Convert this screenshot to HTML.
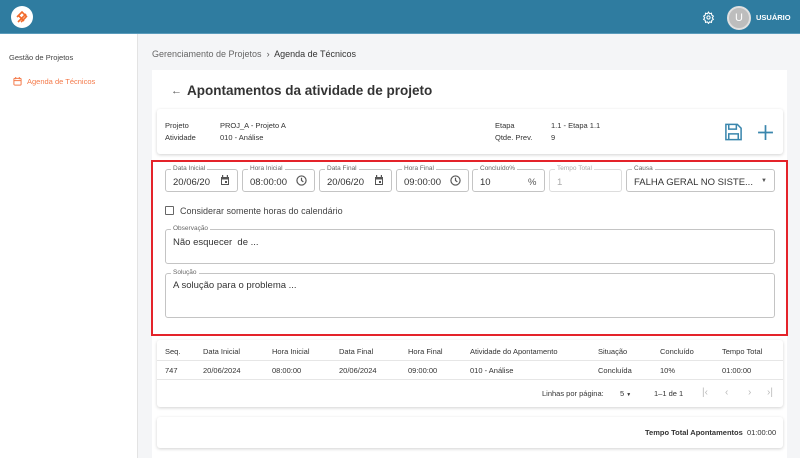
<!DOCTYPE html>
<html><head><meta charset="utf-8"><style>
*{box-sizing:border-box;margin:0;padding:0}
body{width:800px;height:458px;overflow:hidden;font-family:"Liberation Sans",sans-serif;background:#f4f5f7;position:relative;color:#333}
.a{position:absolute}
.hdr{left:0;top:0;width:800px;height:34px;background:#2f7ca0;border-bottom:1px solid #5a9bbb}
.side{left:0;top:34px;width:138px;height:424px;background:#fff;border-right:1px solid #e3e3e3}
.panel{left:152px;top:70px;width:635px;height:388px;background:#fff}
.card{background:#fff;border-radius:3px;box-shadow:0 1px 3px rgba(0,0,0,.18)}
.f{position:absolute;height:23px;border:1px solid #c4c4c4;border-radius:3px;font-size:9.5px;color:#333;padding:7px 0 0 7px}
.f .l{position:absolute;top:-5px;left:5px;background:#fff;padding:0 2px;font-size:6.5px;color:#666;line-height:8px}
.t{font-size:7.5px;color:#333}
.th{font-size:7.5px;color:#333}
.pg{position:absolute;top:387px;font-size:10px;color:#bbb}
</style></head><body>
<div class="a hdr"></div>
<div class="a" style="left:11px;top:6px;width:22px;height:22px;border-radius:50%;background:#fff"></div>
<svg class="a" style="left:15px;top:10px" width="14" height="14" viewBox="0 0 14 14" fill="none" stroke="#f26a2a" stroke-width="1.6"><path d="M2 7l5-5 5 5M3 12l8-8M6 12l5-5M3 5l6 6"/></svg>
<svg class="a" style="left:702px;top:11px" width="13" height="13" viewBox="0 0 24 24" fill="none" stroke="#fff" stroke-width="2"><circle cx="12" cy="12" r="3"/><path d="M12 2l2 3 3.5-1 .5 3.5 3 2-2 3 2 3-3 2-.5 3.5-3.5-1-2 3-2-3-3.5 1-.5-3.5-3-2 2-3-2-3 3-2 .5-3.5 3.5 1z"/></svg>
<div class="a" style="left:727px;top:6px;width:24px;height:24px;border-radius:50%;background:#bdbdbd;border:2px solid #e0e0e0;color:#fff;font-size:11px;text-align:center;line-height:20px">U</div>
<div class="a" style="left:756px;top:13px;font-size:7.5px;font-weight:bold;color:#fff">USUÁRIO</div>
<div class="a side"></div>
<div class="a" style="left:9px;top:53px;font-size:7.5px;color:#444">Gestão de Projetos</div>
<svg class="a" style="left:13px;top:77px" width="9" height="9" viewBox="0 0 10 10" fill="none" stroke="#f47a4a" stroke-width="1.1"><rect x="1" y="1.5" width="8" height="7.5" rx="1"/><path d="M1 4h8M3 0v2.5M7 0v2.5"/></svg>
<div class="a" style="left:27px;top:77px;font-size:7.5px;color:#f47a4a">Agenda de Técnicos</div>
<div class="a" style="left:152px;top:49px;font-size:9px;color:#666">Gerenciamento de Projetos &nbsp;<span style="color:#555">›</span>&nbsp; <span style="color:#333">Agenda de Técnicos</span></div>
<div class="a panel"></div>
<div class="a" style="left:171px;top:85px;font-size:11px;color:#555">←</div>
<div class="a" style="left:187px;top:83px;font-size:13.5px;font-weight:bold;color:#333">Apontamentos da atividade de projeto</div>
<div class="a card" style="left:157px;top:109px;width:626px;height:45px"></div>
<div class="a t" style="left:165px;top:120px;line-height:12px">Projeto<br>Atividade</div>
<div class="a t" style="left:220px;top:120px;line-height:12px">PROJ_A - Projeto A<br>010 - Análise</div>
<div class="a t" style="left:495px;top:120px;line-height:12px">Etapa<br>Qtde. Prev.</div>
<div class="a t" style="left:551px;top:120px;line-height:12px">1.1 - Etapa 1.1<br>9</div>
<svg class="a" style="left:724px;top:122px" width="19" height="20" viewBox="0 0 20 20" fill="none" stroke="#3a86ad" stroke-width="1.6"><path d="M2 2h12l4 4v12H2z"/><path d="M5 2v5h8V2M5 18v-6h10v6"/></svg>
<svg class="a" style="left:757px;top:124px" width="17" height="17" viewBox="0 0 16 16" stroke="#3a86ad" stroke-width="1.6"><path d="M8 1v14M1 8h14"/></svg>
<div class="a" style="left:151px;top:160px;width:637px;height:176px;border:2px solid #e4232a"></div>
<div class="f" style="left:165px;top:169px;width:73px">20/06/20<span class="l">Data Inicial</span></div>
<div class="f" style="left:242px;top:169px;width:73px">08:00:00<span class="l">Hora Inicial</span></div>
<div class="f" style="left:319px;top:169px;width:73px">20/06/20<span class="l">Data Final</span></div>
<div class="f" style="left:396px;top:169px;width:73px">09:00:00<span class="l">Hora Final</span></div>
<div class="f" style="left:472px;top:169px;width:73px">10<span style="position:absolute;left:55px;color:#555">%</span><span class="l">Concluído%</span></div>
<div class="f" style="left:549px;top:169px;width:73px;color:#aaa;border-color:#ddd">1<span class="l" style="color:#aaa">Tempo Total</span></div>
<div class="f" style="left:626px;top:169px;width:149px">FALHA GERAL NO SISTE...<span style="position:absolute;left:134px;top:8px;font-size:6px;color:#555">▼</span><span class="l">Causa</span></div>
<svg class="a" style="left:220px;top:175px" width="10" height="11" viewBox="0 0 10 11" fill="#555"><path d="M1 2h8v8H1zM2 4.5v4.5h6V4.5z"/><rect x="2" y="0" width="1.2" height="2.5"/><rect x="6.8" y="0" width="1.2" height="2.5"/><rect x="5" y="6" width="2" height="2"/></svg>
<svg class="a" style="left:374px;top:175px" width="10" height="11" viewBox="0 0 10 11" fill="#555"><path d="M1 2h8v8H1zM2 4.5v4.5h6V4.5z"/><rect x="2" y="0" width="1.2" height="2.5"/><rect x="6.8" y="0" width="1.2" height="2.5"/><rect x="5" y="6" width="2" height="2"/></svg>
<svg class="a" style="left:296px;top:175px" width="11" height="11" viewBox="0 0 12 12" fill="none" stroke="#555" stroke-width="1.3"><circle cx="6" cy="6" r="5"/><path d="M6 3v3l2 1.5"/></svg>
<svg class="a" style="left:450px;top:175px" width="11" height="11" viewBox="0 0 12 12" fill="none" stroke="#555" stroke-width="1.3"><circle cx="6" cy="6" r="5"/><path d="M6 3v3l2 1.5"/></svg>
<div class="a" style="left:165px;top:206px;width:9px;height:9px;border:1.3px solid #666;border-radius:1px"></div>
<div class="a" style="left:180px;top:206px;font-size:9px;color:#444">Considerar somente horas do calendário</div>
<div class="f" style="left:165px;top:229px;width:610px;height:35px;padding-top:7px">Não esquecer &nbsp;de ...<span class="l">Observação</span></div>
<div class="f" style="left:165px;top:273px;width:610px;height:45px;padding-top:6px">A solução para o problema ...<span class="l">Solução</span></div>
<div class="a card" style="left:157px;top:340px;width:626px;height:67px"></div>
<div class="a" style="left:157px;top:360px;width:626px;border-top:1px solid #e6e6e6"></div>
<div class="a" style="left:157px;top:379px;width:626px;border-top:1px solid #e6e6e6"></div>
<div class="a th" style="left:165px;top:347px">Seq.</div>
<div class="a th" style="left:203px;top:347px">Data Inicial</div>
<div class="a th" style="left:272px;top:347px">Hora Inicial</div>
<div class="a th" style="left:339px;top:347px">Data Final</div>
<div class="a th" style="left:408px;top:347px">Hora Final</div>
<div class="a th" style="left:470px;top:347px">Atividade do Apontamento</div>
<div class="a th" style="left:598px;top:347px">Situação</div>
<div class="a th" style="left:660px;top:347px">Concluído</div>
<div class="a th" style="left:722px;top:347px">Tempo Total</div>
<div class="a t" style="left:165px;top:366px">747</div>
<div class="a t" style="left:203px;top:366px">20/06/2024</div>
<div class="a t" style="left:272px;top:366px">08:00:00</div>
<div class="a t" style="left:339px;top:366px">20/06/2024</div>
<div class="a t" style="left:408px;top:366px">09:00:00</div>
<div class="a t" style="left:470px;top:366px">010 - Análise</div>
<div class="a t" style="left:598px;top:366px">Concluída</div>
<div class="a t" style="left:660px;top:366px">10%</div>
<div class="a t" style="left:722px;top:366px">01:00:00</div>
<div class="a t" style="left:542px;top:389px">Linhas por página:</div>
<div class="a t" style="left:620px;top:389px">5 <span style="font-size:5px">▼</span></div>
<div class="a t" style="left:654px;top:389px">1–1 de 1</div>
<div class="pg" style="left:702px">|‹</div>
<div class="pg" style="left:725px">‹</div>
<div class="pg" style="left:748px">›</div>
<div class="pg" style="left:767px">›|</div>
<div class="a card" style="left:157px;top:417px;width:626px;height:31px"></div>
<div class="a t" style="left:645px;top:428px"><b>Tempo Total Apontamentos</b> &nbsp;01:00:00</div>
</body></html>
